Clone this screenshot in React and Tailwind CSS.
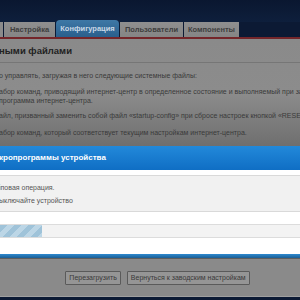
export default function App() {
  const tabs = [
    { label: "Настройка", w: "w-[51px]" },
    { label: "Конфигурация", w: "w-[63px]", active: true },
    { label: "Пользователи", w: "w-[63px]" },
    { label: "Компоненты", w: "w-[55px]" },
  ];

  return (
    <div className="w-[300px] h-[300px] overflow-hidden bg-[#0c1a34] flex flex-col font-['Liberation_Sans',Arial,sans-serif]">
      {/* HEADER */}
      <div className="h-[22px] shrink-0 bg-gradient-to-b from-[#0a1730] to-[#0e1f3c]" />

      {/* TABS */}
      <div className="h-[15px] shrink-0 flex items-end gap-[1px]">
        <div className="w-[3px] h-[15px] bg-[#8b8b8b]" />
        {tabs.map((t) => (
          <div
            key={t.label}
            className={`${t.w} flex items-center justify-center text-[7.5px] font-bold ${
              t.active
                ? "h-[17px] -mt-[2px] rounded-t-[4px] bg-gradient-to-b from-[#3e78a6] to-[#2a5f8c] text-[#c9d8e6]"
                : "h-[15px] bg-gradient-to-b from-[#8f8f8f] to-[#858585] text-[#3e3e3e]"
            }`}
          >
            {t.label}
          </div>
        ))}
      </div>
      <div className="h-[2px] shrink-0 bg-[#74262a]" />

      {/* CONTENT */}
      <div className="h-[107px] shrink-0 bg-gradient-to-b from-[#8a8a8a] via-[#8c8c8c] to-[#6f6f6f] text-[#3a3a3a] text-[7px] leading-[9px] whitespace-nowrap">
        <div className="h-[23px] flex items-center -ml-[1px] text-[9.5px] font-bold text-[#222]">
          ными файлами
        </div>
        <div className="h-[1px] bg-[#767676]" />
        <div className="pt-[8px] -ml-[1px]">
          <p>о управлять, загружая в него следующие системные файлы:</p>
          <p className="mt-[7px]">абор команд, приводящий интернет-центр в определенное состояние и выполняемый при за</p>
          <p>программа интернет-центра.</p>
          <p className="mt-[6px]">айл, призванный заменить собой файл «startup-config» при сбросе настроек кнопкой «RESET</p>
          <p className="mt-[8px]">абор команд, который соответствует текущим настройкам интернет-центра.</p>
        </div>
      </div>

      {/* DIALOG */}
      <div className="shrink-0 bg-white">
        <div className="h-[24px] flex items-center bg-gradient-to-b from-[#2289da] to-[#0f6ec4] text-white text-[8px] font-bold -ml-[1px] whitespace-nowrap">
          кропрограммы устройства
        </div>
        <div className="pt-[5px] pb-[16px]">
          <div className="h-[37px] bg-[#f1f1f1] border-y border-[#d9d9d9] flex flex-col justify-center gap-[4px] text-[7px] leading-[9px] text-[#555] -ml-[1px] whitespace-nowrap">
            <p>іповая операция.</p>
            <p>ыключайте устройство</p>
          </div>
          <div className="mt-[12px] h-[14px] flex border-y border-[#dcdcdc] bg-[#f3f3f3]">
            <div className="w-[42px] h-full bg-[repeating-linear-gradient(135deg,#9fc3d9_0px,#9fc3d9_5px,#bcd6e6_5px,#bcd6e6_10px)]" />
          </div>
        </div>
        <div className="h-[4px] bg-gradient-to-b from-[#2e8ad0] to-[#1a5f95]" />
      </div>

      {/* FOOTER */}
      <div className="h-[39px] shrink-0 border-t border-[#5e5e5e] bg-[#8a8a8a] border-b border-b-[#a0a0a0] flex items-center justify-center gap-[6px] pl-[15px]">
        <button className="h-[14px] px-[3px] border border-[#5a5a5a] bg-[#959595] text-[7px] text-[#3a3a3a] leading-none rounded-[1px]">
          Перезагрузить
        </button>
        <button className="h-[14px] px-[3px] border border-[#5a5a5a] bg-[#959595] text-[7px] text-[#3a3a3a] leading-none rounded-[1px]">
          Вернуться к заводским настройкам
        </button>
      </div>
      <div className="flex-1 bg-[#0c1a34]" />
    </div>
  );
}
